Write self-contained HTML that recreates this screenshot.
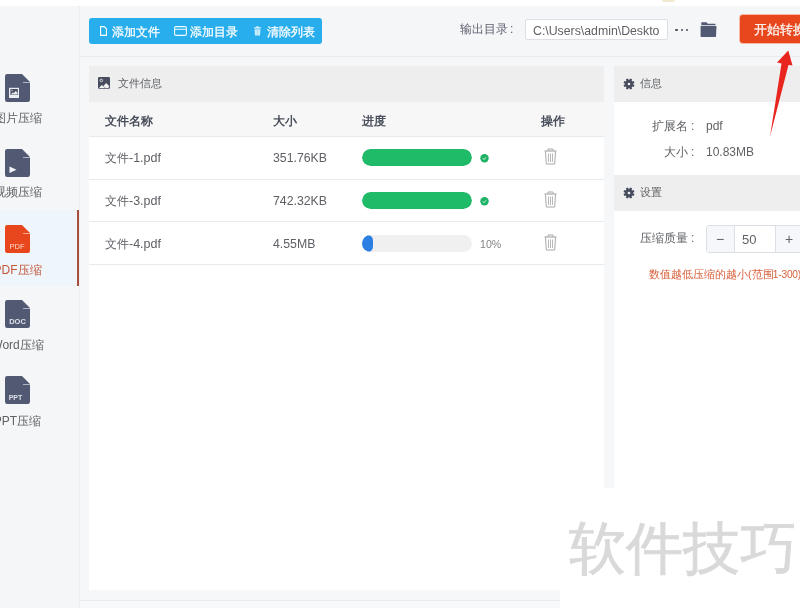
<!DOCTYPE html>
<html><head><meta charset="utf-8">
<style>
*{box-sizing:border-box;margin:0;padding:0}
html,body{width:800px;height:608px;overflow:hidden;background:#fff;font-family:"Liberation Sans",sans-serif;position:relative}
.a{position:absolute}
.t{position:absolute;white-space:nowrap;line-height:1}
#side{left:0;top:6px;width:80px;height:602px;background:#f5f6f8;border-right:1px solid #ecedf0}
#active{left:0;top:210px;width:79px;height:76px;background:#eef6fb}
#activebar{left:77px;top:210px;width:2px;height:76px;background:#a8503a}
.ico{position:absolute;left:5px;width:25px;height:28px}
.lbl{position:absolute;font-size:12px;color:#606266;white-space:nowrap;line-height:1;text-align:center;width:60px;left:-12.5px}
#hdr{left:80px;top:6px;width:720px;height:51px;background:#f5f6f8;border-bottom:1px solid #e9eaed}
#content{left:80px;top:57px;width:720px;height:551px;background:#f6f7f9}
#btns{left:89px;top:18px;width:233px;height:26px;background:#29aeed;border-radius:3px}
.bt{position:absolute;top:8.4px;font-size:11.6px;color:#fff;font-weight:normal;-webkit-text-stroke:0.25px #fff;line-height:1;white-space:nowrap}
#lp{left:89px;top:66px;width:515px;height:524px;background:#fff}
.ph{position:absolute;left:0;top:0;width:100%;height:36px;background:#eeeeee}
.pt{position:absolute;top:12px;font-size:11px;color:#606266;line-height:1;white-space:nowrap}
#th{left:0;top:36px;width:515px;height:35px;background:#f7f7f7;border-bottom:1px solid #e8e9eb}
.thc{position:absolute;top:12.5px;font-size:12px;font-weight:bold;color:#4a4f5c;line-height:1;white-space:nowrap}
.row{position:absolute;left:0;width:515px;border-bottom:1px solid #e8e9eb;background:#fff}
.cell{position:absolute;font-size:12px;color:#5f6066;line-height:1;white-space:nowrap}
.bar{position:absolute;left:273px;width:110px;height:17px;border-radius:9px;background:#f0f0f0;overflow:hidden}
.fill{position:absolute;left:0;top:0;height:17px;border-radius:9px;background:#1fbb68}
#rp{left:614px;top:66px;width:186px;height:422px;background:#fff}
#wm{left:560px;top:488px;width:240px;height:120px;background:#fff}
</style></head><body><div style="position:absolute;left:0;top:0;width:800px;height:608px;will-change:opacity;opacity:0.999">
<div class="a" style="left:0;top:0;width:800px;height:6px;background:#fff"></div>
<div class="a" style="left:662px;top:0;width:13px;height:2px;background:#f1ead0;border-radius:0 0 4px 4px"></div>

<!-- sidebar -->
<div class="a" id="side"></div>
<div class="a" id="active"></div>
<div class="a" id="activebar"></div>

<svg class="ico" style="top:74px" viewBox="0 0 25 28"><path d="M2.2 0H17L25 8V25.8A2.2 2.2 0 0 1 22.8 28H2.2A2.2 2.2 0 0 1 0 25.8V2.2A2.2 2.2 0 0 1 2.2 0Z" fill="#525a73"/><path d="M18 8.5H25" stroke="#c9ccd6" stroke-width="0.8"/><rect x="4" y="13.8" width="10" height="10.2" fill="#eceef2"/><rect x="5.4" y="15" width="7.4" height="6" fill="#4a5166"/><path d="M5.9 20.4L7.6 18.6L9 18.9L10.6 17L12.3 18.6V20.4Z" fill="#eceef2"/><circle cx="7" cy="16.5" r="0.7" fill="#c9ccd6"/></svg>
<div class="lbl" style="top:112px">图片压缩</div>

<svg class="ico" style="top:149px" viewBox="0 0 25 28"><path d="M2.2 0H17L25 8V25.8A2.2 2.2 0 0 1 22.8 28H2.2A2.2 2.2 0 0 1 0 25.8V2.2A2.2 2.2 0 0 1 2.2 0Z" fill="#525a73"/><path d="M18 8.5H25" stroke="#c9ccd6" stroke-width="0.8"/><path d="M4.5 17.5L11.5 20.8L4.5 24Z" fill="#f4f5f8"/></svg>
<div class="lbl" style="top:186px">视频压缩</div>

<svg class="ico" style="top:225px" viewBox="0 0 25 28"><path d="M2.2 0H17L25 8V25.8A2.2 2.2 0 0 1 22.8 28H2.2A2.2 2.2 0 0 1 0 25.8V2.2A2.2 2.2 0 0 1 2.2 0Z" fill="#e8461c"/><path d="M18 8.5H25" stroke="#f7c2b0" stroke-width="0.8"/><text x="12" y="24.3" font-family="Liberation Sans" font-size="7.6" fill="#fbd9cc" text-anchor="middle">PDF</text></svg>
<div class="lbl" style="top:264px;color:#c4573d">PDF压缩</div>

<svg class="ico" style="top:300px" viewBox="0 0 25 28"><path d="M2.2 0H17L25 8V25.8A2.2 2.2 0 0 1 22.8 28H2.2A2.2 2.2 0 0 1 0 25.8V2.2A2.2 2.2 0 0 1 2.2 0Z" fill="#525a73"/><path d="M18 8.5H25" stroke="#c9ccd6" stroke-width="0.8"/><text x="12.5" y="24.3" font-family="Liberation Sans" font-size="7.5" font-weight="bold" fill="#dfe1e8" text-anchor="middle">DOC</text></svg>
<div class="lbl" style="top:339px">Word压缩</div>

<svg class="ico" style="top:376px" viewBox="0 0 25 28"><path d="M2.2 0H17L25 8V25.8A2.2 2.2 0 0 1 22.8 28H2.2A2.2 2.2 0 0 1 0 25.8V2.2A2.2 2.2 0 0 1 2.2 0Z" fill="#525a73"/><path d="M18 8.5H25" stroke="#c9ccd6" stroke-width="0.8"/><text x="10.5" y="23.6" font-family="Liberation Sans" font-size="7" font-weight="bold" fill="#dfe1e8" text-anchor="middle">PPT</text></svg>
<div class="lbl" style="top:415px">PPT压缩</div>

<!-- header -->
<div class="a" id="hdr"></div>
<div class="a" id="content"></div>
<div class="a" id="btns">
  <svg class="a" style="left:11px;top:8px" width="7" height="10" viewBox="0 0 7 10"><path d="M0.6 0.6H4.2L6.4 2.8V9.4H0.6Z" fill="none" stroke="#fff" stroke-width="1.1"/></svg>
  <div class="bt" style="left:23px">添加文件</div>
  <svg class="a" style="left:85px;top:8px" width="13" height="10" viewBox="0 0 13 10"><rect x="0.6" y="0.6" width="11.8" height="8.8" rx="1.3" fill="none" stroke="#f2fcff" stroke-width="1.1"/><path d="M1 3.3H12" stroke="#e6f8ff" stroke-width="1"/></svg>
  <div class="bt" style="left:100.5px">添加目录</div>
  <svg class="a" style="left:165px;top:8px" width="7" height="10" viewBox="0 0 7 10"><path d="M2.4 0.3H4.6V1.2H6.9V2.6H0.1V1.2H2.4Z" fill="#d9f6ff"/><path d="M0.6 3.2H6.4L6 9.6H1Z" fill="#c9efff"/><path d="M3.5 4.2V8.6" stroke="#8fd6f5" stroke-width="0.8"/></svg>
  <div class="bt" style="left:177.5px">清除列表</div>
</div>

<div class="t" style="left:460px;top:23px;font-size:12px;color:#5f6270">输出目录<span style="margin-left:2px">:</span></div>
<div class="a" style="left:525px;top:19px;width:143px;height:21px;background:#fff;border:1px solid #dcdfe6;border-radius:2px;overflow:hidden">
  <div class="a" style="left:7px;top:0;width:127px;height:19px;overflow:hidden"><div class="t" style="left:0;top:4.5px;font-size:12.3px;color:#606266">C:\Users\admin\Desktop</div></div>
</div>
<div class="a" style="left:675.3px;top:28.6px;width:2.3px;height:2.3px;border-radius:50%;background:#474c5a"></div>
<div class="a" style="left:680.5px;top:28.6px;width:2.3px;height:2.3px;border-radius:50%;background:#474c5a"></div>
<div class="a" style="left:685.7px;top:28.6px;width:2.3px;height:2.3px;border-radius:50%;background:#474c5a"></div>
<svg class="a" style="left:700px;top:22px" width="18" height="16" viewBox="0 0 18 16"><path d="M1.8 0.3H6.2Q6.8 0.3 7.2 0.9L7.8 1.8H15Q15.5 1.8 15.5 2.3V3.2H1.3V0.8Q1.3 0.3 1.8 0.3Z" fill="#525a73"/><path d="M0.6 4H16Q16.6 4 16.5 4.6L16 14.3Q16 14.9 15.4 14.9H1.2Q0.6 14.9 0.6 14.3Z" fill="#525a73"/></svg>
<div class="a" style="left:740px;top:15px;width:70px;height:28px;background:#e8471d;border-radius:3px;box-shadow:0 0 0 1px #f7b9a2">
  <div class="t" style="left:13.5px;top:8.5px;font-size:12.5px;color:#fdf3ef;-webkit-text-stroke:0.3px #fdf3ef">开始转换</div>
</div>

<!-- left panel -->
<div class="a" id="lp">
  <div class="ph">
    <svg class="a" style="left:9px;top:11px" width="12" height="12" viewBox="0 0 12 12"><rect x="0" y="0" width="12" height="11.8" rx="1.2" fill="#474d5e"/><circle cx="3.3" cy="3.4" r="1.25" fill="none" stroke="#e8e8ea" stroke-width="0.9"/><path d="M0.9 11L3.8 7.9L7.2 11Z" fill="#f2f2f2"/><path d="M5.4 9.1L8.2 6L11.1 9V10.2L9.9 11H7.6Z" fill="#f2f2f2"/></svg>
    <div class="pt" style="left:29px">文件信息</div>
  </div>
  <div class="a" id="th">
    <div class="thc" style="left:16px">文件名称</div>
    <div class="thc" style="left:184px">大小</div>
    <div class="thc" style="left:273px">进度</div>
    <div class="thc" style="left:452px">操作</div>
  </div>
  <div class="row" style="top:71px;height:43px">
    <div class="cell" style="left:16px;top:15px">文件<span style="font-size:12.5px">-1.pdf</span></div>
    <div class="cell" style="left:184px;top:15px"><span style="font-size:12.3px">351.76KB</span></div>
    <div class="bar" style="top:12px"><div class="fill" style="width:110px"></div></div>
    <svg class="a" style="left:391px;top:17px" width="9" height="9" viewBox="0 0 9 9"><circle cx="4.5" cy="4.3" r="4.2" fill="#1db266"/><path d="M2.6 4.5L3.9 5.5L6.3 3.3" fill="none" stroke="#d8f5e4" stroke-width="1"/></svg>
    <svg class="a trash" style="left:455px;top:11px" width="13" height="17" viewBox="0 0 13 17"><path d="M4 2.5V1H9V2.5" fill="none" stroke="#a8a8a8" stroke-width="1"/><path d="M0.5 3H12.5" stroke="#a8a8a8" stroke-width="1.2"/><path d="M1.5 3.5L2.3 16H10.7L11.5 3.5" fill="none" stroke="#a8a8a8" stroke-width="1"/><path d="M4.5 5.5V14M6.5 5.5V14M8.5 5.5V14" stroke="#b0b0b0" stroke-width="0.9"/></svg>
  </div>
  <div class="row" style="top:114px;height:42px">
    <div class="cell" style="left:16px;top:15px">文件<span style="font-size:12.5px">-3.pdf</span></div>
    <div class="cell" style="left:184px;top:15px"><span style="font-size:12.3px">742.32KB</span></div>
    <div class="bar" style="top:12px"><div class="fill" style="width:110px"></div></div>
    <svg class="a" style="left:391px;top:16.5px" width="9" height="9" viewBox="0 0 9 9"><circle cx="4.5" cy="4.3" r="4.2" fill="#1db266"/><path d="M2.6 4.5L3.9 5.5L6.3 3.3" fill="none" stroke="#d8f5e4" stroke-width="1"/></svg>
    <svg class="a trash" style="left:455px;top:11px" width="13" height="17" viewBox="0 0 13 17"><path d="M4 2.5V1H9V2.5" fill="none" stroke="#a8a8a8" stroke-width="1"/><path d="M0.5 3H12.5" stroke="#a8a8a8" stroke-width="1.2"/><path d="M1.5 3.5L2.3 16H10.7L11.5 3.5" fill="none" stroke="#a8a8a8" stroke-width="1"/><path d="M4.5 5.5V14M6.5 5.5V14M8.5 5.5V14" stroke="#b0b0b0" stroke-width="0.9"/></svg>
  </div>
  <div class="row" style="top:156px;height:43px">
    <div class="cell" style="left:16px;top:16px">文件<span style="font-size:12.5px">-4.pdf</span></div>
    <div class="cell" style="left:184px;top:16px"><span style="font-size:12.3px">4.55MB</span></div>
    <div class="bar" style="top:13px"><div class="fill" style="width:11px;background:#2b7fe3"></div></div>
    <div class="cell" style="left:391px;top:17px;font-size:10.6px;color:#858585">10%</div>
    <svg class="a trash" style="left:455px;top:12px" width="13" height="17" viewBox="0 0 13 17"><path d="M4 2.5V1H9V2.5" fill="none" stroke="#a8a8a8" stroke-width="1"/><path d="M0.5 3H12.5" stroke="#a8a8a8" stroke-width="1.2"/><path d="M1.5 3.5L2.3 16H10.7L11.5 3.5" fill="none" stroke="#a8a8a8" stroke-width="1"/><path d="M4.5 5.5V14M6.5 5.5V14M8.5 5.5V14" stroke="#b0b0b0" stroke-width="0.9"/></svg>
  </div>
</div>

<!-- right panel -->
<div class="a" id="rp">
  <div class="ph">
    <svg class="a" style="left:8.6px;top:11.6px" width="12" height="12" viewBox="0 0 12 12"><path d="M10.17 6.48 L11.49 7.12 L10.67 9.09 L9.29 8.61 L8.61 9.29 L9.09 10.67 L7.12 11.49 L6.48 10.17 L5.52 10.17 L4.88 11.49 L2.91 10.67 L3.39 9.29 L2.71 8.61 L1.33 9.09 L0.51 7.12 L1.83 6.48 L1.83 5.52 L0.51 4.88 L1.33 2.91 L2.71 3.39 L3.39 2.71 L2.91 1.33 L4.88 0.51 L5.52 1.83 L6.48 1.83 L7.12 0.51 L9.09 1.33 L8.61 2.71 L9.29 3.39 L10.67 2.91 L11.49 4.88 L10.17 5.52Z" fill="#474d5e"/><circle cx="6" cy="6" r="1.35" fill="#eee"/></svg>
    <div class="pt" style="left:26px">信息</div>
  </div>
  <div class="t" style="left:38px;top:54px;font-size:12px;color:#606266">扩展名<span style="margin-left:3px">:</span></div>
  <div class="t" style="left:92px;top:54px;font-size:12px;color:#606266">pdf</div>
  <div class="t" style="left:50px;top:80px;font-size:12px;color:#606266">大小<span style="margin-left:3px">:</span></div>
  <div class="t" style="left:92px;top:80px;font-size:12px;color:#606266">10.83MB</div>
  <div class="ph" style="top:109px">
    <svg class="a" style="left:8.6px;top:11.6px" width="12" height="12" viewBox="0 0 12 12"><path d="M10.17 6.48 L11.49 7.12 L10.67 9.09 L9.29 8.61 L8.61 9.29 L9.09 10.67 L7.12 11.49 L6.48 10.17 L5.52 10.17 L4.88 11.49 L2.91 10.67 L3.39 9.29 L2.71 8.61 L1.33 9.09 L0.51 7.12 L1.83 6.48 L1.83 5.52 L0.51 4.88 L1.33 2.91 L2.71 3.39 L3.39 2.71 L2.91 1.33 L4.88 0.51 L5.52 1.83 L6.48 1.83 L7.12 0.51 L9.09 1.33 L8.61 2.71 L9.29 3.39 L10.67 2.91 L11.49 4.88 L10.17 5.52Z" fill="#474d5e"/><circle cx="6" cy="6" r="1.35" fill="#eee"/></svg>
    <div class="pt" style="left:26px">设置</div>
  </div>
  <div class="t" style="left:26px;top:166px;font-size:12px;color:#606266">压缩质量<span style="margin-left:3px">:</span></div>
  <div class="a" style="left:92px;top:159px;width:110px;height:28px;border:1px solid #dcdfe6;border-radius:3px;background:#fff;overflow:hidden">
    <div class="a" style="left:0;top:0;width:28px;height:26px;background:#f5f7fa;border-right:1px solid #dcdfe6"></div>
    <div class="a" style="left:68px;top:0;width:40px;height:26px;background:#f5f7fa;border-left:1px solid #dcdfe6"></div>
    <div class="t" style="left:9px;top:6px;font-size:14px;color:#606266">−</div>
    <div class="t" style="left:35px;top:7px;font-size:13px;color:#606266">50</div>
    <div class="t" style="left:78px;top:6px;font-size:14px;color:#606266">+</div>
  </div>
  <div class="t" style="left:35px;top:203px;font-size:10.7px;color:#d75f3b">数值越低压缩的越小(范围<span style="font-size:10.2px;margin-left:-0.8px;letter-spacing:-0.2px">1-300)</span></div>
</div>

<!-- bottom -->
<div class="a" style="left:80px;top:600px;width:720px;height:1px;background:#eaebee"></div>
<div class="a" style="left:80px;top:601px;width:720px;height:7px;background:#f8f9fa"></div>

<!-- arrow -->
<svg class="a" style="left:0;top:0" width="800" height="608" viewBox="0 0 800 608"><path d="M788.3 50.5L792.5 65.5L788.5 65L770 136.5L781.5 63.5L777 62.5Z" fill="#e8261e"/></svg>

<!-- watermark -->
<div class="a" id="wm"></div>
<div class="t" style="left:568.5px;top:521px;font-size:56.5px;color:#d9d9d9;-webkit-text-stroke:0.8px #d9d9d9">软件技巧</div>
</div></body></html>
